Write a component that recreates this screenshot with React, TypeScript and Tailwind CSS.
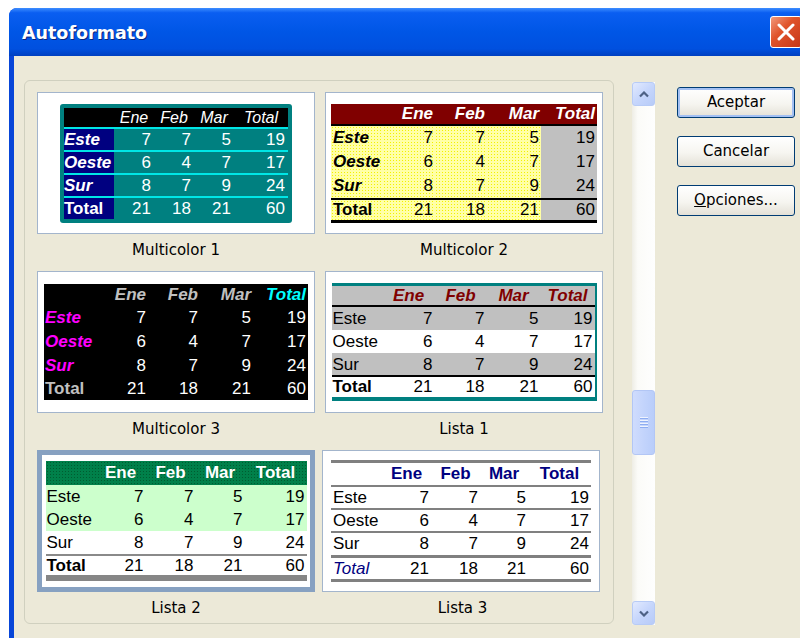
import type { ReactNode } from "react";
import clsx from "clsx";

const HEAD = ["", "Ene", "Feb", "Mar", "Total"];
const ROWS = [
  ["Este", "7", "7", "5", "19"],
  ["Oeste", "6", "4", "7", "17"],
  ["Sur", "8", "7", "9", "24"],
];
const TOTAL = ["Total", "21", "18", "21", "60"];

// dotted fills, like Excel's 50% patterns
const YELLOW =
  "bg-[#ffffa6] bg-[image:radial-gradient(#f2f200_0.8px,transparent_0.9px)] bg-[length:3px_3px]";
const GREEN =
  "bg-[#00804a] bg-[image:radial-gradient(#005c30_0.8px,transparent_0.9px)] bg-[length:3px_3px]";

type LineProps = {
  row: string[];
  cols: string;
  className?: string;
  first?: string;
  num?: string;
  last?: string;
};

function Line({ row, cols, className, first, num, last }: LineProps) {
  return (
    <div className={clsx("grid", cols, className)}>
      {row.map((c, i) => (
        <div key={i} className={i === 0 ? first : i === 4 && last ? last : num}>
          {c}
        </div>
      ))}
    </div>
  );
}

function Multicolor1() {
  const cols = "grid-cols-[50px_40px_40px_40px_54px]";
  return (
    <div className="w-[232px] rounded-[3px] bg-[#008080] p-[4px] text-white">
      <Line
        row={HEAD}
        cols={cols}
        className="h-[19px] bg-black text-[16px] italic leading-[19px]"
        num="text-center"
      />
      {[...ROWS, TOTAL].map((r, i) => (
        <Line
          key={i}
          row={r}
          cols={cols}
          className="h-[23px] border-t-2 border-[#00e6e6] leading-[21px]"
          first={clsx("bg-[#000080] font-bold", i < 3 && "italic")}
          num="pr-[3px] text-right"
        />
      ))}
    </div>
  );
}

function Multicolor2() {
  const cols = "grid-cols-[52px_52px_52px_54px_56px]";
  return (
    <div className="w-[266px] border-b-[3px] border-black text-black">
      <Line
        row={HEAD}
        cols={cols}
        className="h-[22px] border-b-2 border-black bg-[#800000] font-bold italic leading-[20px] text-white"
        num="pr-[2px] text-right"
      />
      {ROWS.map((r, i) => (
        <Line
          key={i}
          row={r}
          cols={cols}
          className="h-[24px] leading-[24px]"
          first={clsx("pl-[2px] font-bold italic", YELLOW)}
          num={clsx("pr-[2px] text-right", YELLOW)}
          last="bg-[#c0c0c0] pr-[2px] text-right"
        />
      ))}
      <Line
        row={TOTAL}
        cols={cols}
        className="h-[22px] border-t-2 border-black leading-[20px]"
        first={clsx("pl-[2px] font-bold", YELLOW)}
        num={clsx("pr-[2px] text-right", YELLOW)}
        last="bg-[#c0c0c0] pr-[2px] text-right"
      />
    </div>
  );
}

function Multicolor3() {
  const cols = "grid-cols-[52px_52px_52px_53px_55px]";
  return (
    <div className="w-[264px] bg-black text-white">
      <Line
        row={HEAD}
        cols={cols}
        className="h-[22px] font-bold italic leading-[22px] text-[#c0c0c0]"
        num="pr-[2px] text-right"
        last="pr-[2px] text-right text-[#00ffff]"
      />
      {ROWS.map((r, i) => (
        <Line
          key={i}
          row={r}
          cols={cols}
          className="h-[24px] leading-[24px]"
          first="pl-[1px] font-bold italic text-[#ff00ff]"
          num="pr-[2px] text-right"
        />
      ))}
      <Line
        row={TOTAL}
        cols={cols}
        className="h-[22px] leading-[22px]"
        first="pl-[1px] font-bold text-[#c0c0c0]"
        num="pr-[2px] text-right"
      />
    </div>
  );
}

function Lista1() {
  const cols = "grid-cols-[51px_52px_52px_54px_54px]";
  const bands = ["bg-[#c0c0c0] h-[23px]", "bg-white h-[23px]", "bg-[#c0c0c0] h-[22px]"];
  return (
    <div className="w-[265px] border-t-[3px] border-r-2 border-b-4 border-[#008080] text-black">
      <Line
        row={HEAD}
        cols={cols}
        className="h-[21px] border-b-2 border-black bg-[#c0c0c0] font-bold italic leading-[19px] text-[#800000]"
        num="text-center"
      />
      {ROWS.map((r, i) => (
        <Line
          key={i}
          row={r}
          cols={cols}
          className={clsx("leading-[23px]", bands[i])}
          first="pl-[1px]"
          num="pr-[2px] text-right"
        />
      ))}
      <Line
        row={TOTAL}
        cols={cols}
        className="h-[22px] border-t-2 border-black bg-white leading-[20px]"
        first="pl-[1px] font-bold"
        num="pr-[2px] text-right"
      />
    </div>
  );
}

function Lista2() {
  const cols = "grid-cols-[50px_50px_50px_49px_62px]";
  return (
    <div className="w-[261px] border-b-[6px] border-[#868686] text-black">
      <Line
        row={HEAD}
        cols={cols}
        className={clsx("h-[24px] font-bold leading-[24px] text-white", GREEN)}
        num="text-center"
      />
      {ROWS.map((r, i) => (
        <Line
          key={i}
          row={r}
          cols={cols}
          className={clsx("h-[23px] leading-[23px]", i < 2 ? "bg-[#ccffcc]" : "bg-white")}
          first="pl-[1px]"
          num="pr-[2px] text-right"
        />
      ))}
      <Line
        row={TOTAL}
        cols={cols}
        className="h-[21px] border-t-2 border-[#8a8a8a] leading-[19px]"
        first="pl-[1px] font-bold"
        num="pr-[2px] text-right"
      />
    </div>
  );
}

function Lista3() {
  const cols = "grid-cols-[51px_49px_49px_48px_63px]";
  const rules = [
    "h-[23px] border-b-2 leading-[21px]",
    "h-[23px] border-b-2 leading-[21px]",
    "h-[25px] border-b-[3px] leading-[22px]",
  ];
  return (
    <div className="w-[260px] border-t-[3px] border-b-[3px] border-[#808080] text-black">
      <Line
        row={HEAD}
        cols={cols}
        className="h-[24px] border-b-2 border-[#808080] font-bold leading-[22px] text-[#000080]"
        num="text-center"
      />
      {ROWS.map((r, i) => (
        <Line
          key={i}
          row={r}
          cols={cols}
          className={clsx("border-[#808080]", rules[i])}
          first="pl-[2px]"
          num="pr-[2px] text-right"
        />
      ))}
      <Line
        row={TOTAL}
        cols={cols}
        className="h-[21px] leading-[21px]"
        first="pl-[2px] italic text-[#000080]"
        num="pr-[2px] text-right"
      />
    </div>
  );
}

function Preview({
  label,
  selected,
  className,
  children,
}: {
  label: string;
  selected?: boolean;
  className?: string;
  children: ReactNode;
}) {
  return (
    <div className={clsx("flex flex-col", className)}>
      <div
        className={clsx(
          "flex h-[142px] w-[278px] items-center justify-center bg-white font-['Liberation_Sans',Arial,sans-serif] text-[17px]",
          selected ? "border-[5px] border-[#87a1c1]" : "border border-[#a3b5cc]",
        )}
      >
        {children}
      </div>
      <div className="h-[37px] pt-[6px] text-center text-[15px] leading-[20px] text-black">{label}</div>
    </div>
  );
}

function ScrollButton({ dir }: { dir: "up" | "down" }) {
  return (
    <div className="flex h-[24px] items-center justify-center rounded-[3px] border border-[#b7cbf6] bg-[linear-gradient(135deg,#e2eafe,#c6d6fc_50%,#b7cbf8)]">
      <svg width="10" height="7" viewBox="0 0 10 7">
        <path
          d={dir === "up" ? "M1 5.5 5 1.5 9 5.5" : "M1 1.5 5 5.5 9 1.5"}
          fill="none"
          stroke="#4d6185"
          strokeWidth="2.2"
        />
      </svg>
    </div>
  );
}

function ScrollBar() {
  return (
    <div className="ml-[18px] mt-[2px] flex h-[543px] w-[23px] flex-col bg-[linear-gradient(to_right,#eeede5,#fbfbf8_25%,#fefefe)]">
      <ScrollButton dir="up" />
      <div className="h-[284px]" />
      <div className="flex h-[65px] flex-col items-center justify-center gap-[1px] rounded-[3px] border border-[#b2c6f5] bg-[linear-gradient(to_right,#cfdcfd,#c3d4fc_50%,#b9cdfa)]">
        {[0, 1, 2, 3].map((i) => (
          <div key={i} className="h-[2px] w-[8px] border-b border-[#8eadf1] bg-[#eef3fe]" />
        ))}
      </div>
      <div className="flex-1" />
      <ScrollButton dir="down" />
    </div>
  );
}

function DialogButton({ children, primary }: { children: ReactNode; primary?: boolean }) {
  return (
    <button
      className={clsx(
        "h-[31px] w-[118px] rounded-[3px] border border-[#003c74] bg-[linear-gradient(to_bottom,#ffffff,#f6f5f0_55%,#e4e1d7)] text-[15px] text-black",
        primary && "shadow-[inset_0_0_0_2px_#a3c0f3]",
      )}
    >
      {children}
    </button>
  );
}

export default function App() {
  return (
    <div className="h-[638px] w-[800px] overflow-hidden bg-white pl-[9px] pt-[8px] font-['DejaVu_Sans',sans-serif]">
      <div className="flex h-[660px] w-[800px] flex-col rounded-t-[8px] bg-[#0846d8]">
        {/* title bar */}
        <div className="flex h-[48px] items-center rounded-t-[8px] bg-[linear-gradient(to_bottom,#3d8dff_0%,#0a5ef1_10%,#0056e6_50%,#0050df_85%,#0040c0_100%)] pl-[13px] pr-[7px]">
          <span className="pt-[3px] text-[17.5px] font-bold text-white [text-shadow:1px_1px_0_#0a247a]">
            Autoformato
          </span>
          <div className="ml-auto flex h-[32px] w-[32px] items-center justify-center rounded-[3px] border border-white bg-[linear-gradient(135deg,#f29a7d,#e0542b_40%,#c63517)]">
            <svg width="18" height="18" viewBox="0 0 18 18">
              <path d="M2 2 16 16M16 2 2 16" stroke="#ffffff" strokeWidth="3" strokeLinecap="round" />
            </svg>
          </div>
        </div>

        {/* client area */}
        <div className="ml-[5px] flex flex-1 items-start bg-[#ece9d8] pl-[10px] pt-[24px]">
          <div className="h-[544px] w-[590px] rounded-[6px] border border-[#d0d0bf] pl-[12px] pt-[11px]">
            <div className="grid grid-cols-[278px_278px] gap-x-[10px]">
              <Preview label="Multicolor 1">
                <Multicolor1 />
              </Preview>
              <Preview label="Multicolor 2">
                <Multicolor2 />
              </Preview>
              <Preview label="Multicolor 3">
                <Multicolor3 />
              </Preview>
              <Preview label="Lista 1">
                <Lista1 />
              </Preview>
              <Preview label="Lista 2" selected>
                <Lista2 />
              </Preview>
              <Preview label="Lista 3" className="-ml-[3px]">
                <Lista3 />
              </Preview>
            </div>
          </div>

          <ScrollBar />

          <div className="ml-[22px] mt-[7px] flex flex-col gap-[18px]">
            <DialogButton primary>Aceptar</DialogButton>
            <DialogButton>Cancelar</DialogButton>
            <DialogButton>
              <span className="underline">O</span>pciones...
            </DialogButton>
          </div>
        </div>
      </div>
    </div>
  );
}
